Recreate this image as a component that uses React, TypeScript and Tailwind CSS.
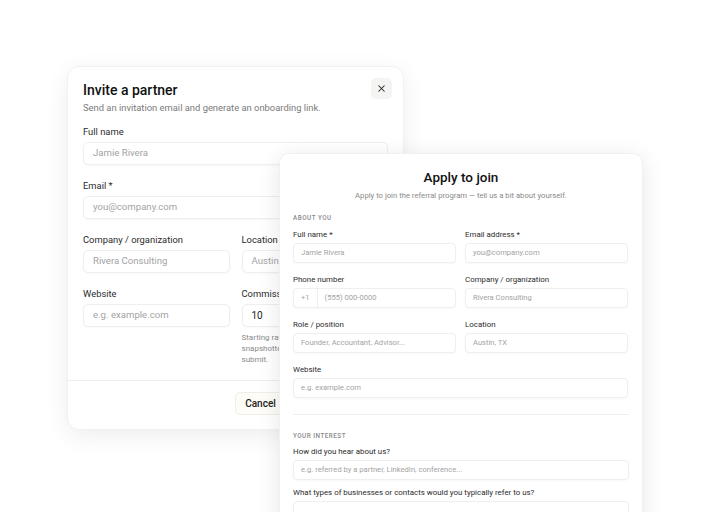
import React from "react";
import { X } from "lucide-react";

const font = { fontFamily: 'Roboto, "Noto Sans", sans-serif' };

function Field({
  label,
  placeholder,
  value,
  className = "",
}: {
  label: string;
  placeholder?: string;
  value?: string;
  className?: string;
}) {
  return (
    <div className={"flex flex-col gap-[3px] " + className}>
      <label className="text-[9.4px] leading-[14px] text-[#2b2b2b]">{label}</label>
      <div className="h-[23px] rounded-[5px] border border-[#efefef] bg-white px-[9px] flex items-center shadow-[0_1px_2px_rgba(0,0,0,0.03)]">
        {value ? (
          <span className="text-[10px] text-[#222]">{value}</span>
        ) : (
          <span className="text-[9.6px] text-[#a3a3a3] whitespace-nowrap">{placeholder}</span>
        )}
      </div>
    </div>
  );
}

function SmallField({
  label,
  placeholder,
  prefix,
  className = "",
}: {
  label: string;
  placeholder: string;
  prefix?: string;
  className?: string;
}) {
  return (
    <div className={"flex flex-col gap-[2px] " + className}>
      <label className="text-[7.9px] leading-[12px] text-[#2b2b2b]">{label}</label>
      <div className="h-[20px] rounded-[4px] border border-[#efefef] bg-white flex items-center shadow-[0_1px_2px_rgba(0,0,0,0.03)]">
        {prefix && (
          <span className="h-full flex items-center px-[7px] border-r border-[#efefef] text-[7.6px] text-[#a3a3a3]">
            {prefix}
          </span>
        )}
        <span className="px-[7px] text-[7.6px] text-[#a3a3a3] whitespace-nowrap">{placeholder}</span>
      </div>
    </div>
  );
}

function InviteCard() {
  return (
    <div className="absolute left-[67px] top-[66px] w-[337px] h-[364px] rounded-[12px] bg-white border border-[#f1f1f1] shadow-[0_6px_24px_rgba(0,0,0,0.07)] flex flex-col">
      <div className="px-[15px] pt-[11px] flex flex-col">
        <div className="flex items-start justify-between">
          <h2 className="mt-[2px] text-[14px] leading-[20px] font-medium text-[#111]">Invite a partner</h2>
          <button className="w-[21px] h-[21px] mr-[-4px] rounded-[5px] bg-[#f4f4f3] flex items-center justify-center text-[#222]">
            <X size={11} strokeWidth={2.2} />
          </button>
        </div>
        <p className="mt-[1px] text-[9.4px] leading-[14px] text-[#7a7a7a]">
          Send an invitation email and generate an onboarding link.
        </p>
        <div className="mt-[10px] flex flex-col gap-[14px]">
          <Field label="Full name" placeholder="Jamie Rivera" />
          <Field label="Email *" placeholder="you@company.com" />
          <div className="grid grid-cols-2 gap-[12px]">
            <Field label="Company / organization" placeholder="Rivera Consulting" />
            <Field label="Location" placeholder="Austin, TX" />
          </div>
          <div className="grid grid-cols-2 gap-[12px]">
            <Field label="Website" placeholder="e.g. example.com" />
            <div className="flex flex-col">
              <Field label="Commission rate (%)" value="10" />
              <p className="mt-[5px] text-[8px] leading-[11px] text-[#8a8a8a]">
                Starting rate for this partner. It is snapshotted onto the application on submit.
              </p>
            </div>
          </div>
        </div>
      </div>
      <div className="mt-[15px] border-t border-[#efefef]" />
      <div className="px-[16px] pt-[11px] flex justify-end gap-[8px]">
        <button className="h-[23px] w-[51px] rounded-[5px] border border-[#efefe9] bg-[#fdfcf6] text-[10px] font-medium text-[#222]">
          Cancel
        </button>
        <button className="h-[23px] w-[93px] rounded-[5px] bg-[#222] text-[10px] font-medium text-white">
          Send invitation
        </button>
      </div>
    </div>
  );
}

function ApplyCard() {
  return (
    <div className="absolute left-[279px] top-[153px] w-[364px] h-[420px] rounded-[10px] bg-white border border-[#f1f1f1] shadow-[0_4px_22px_rgba(0,0,0,0.10)] px-[13px] pt-[14px]">
      <div className="flex flex-col items-center">
        <h2 className="text-[13.5px] leading-[18px] font-medium text-[#111]">Apply to join</h2>
        <p className="mt-[4px] text-[7.7px] leading-[12px] text-[#8a8a8a]">
          Apply to join the referral program — tell us a bit about yourself.
        </p>
      </div>
      <div className="mt-[11px] text-[6.3px] leading-[10px] tracking-[0.08em] font-medium text-[#8a8a8a] uppercase">
        About you
      </div>
      <div className="mt-[6px] flex flex-col gap-[11px] pr-[1px]">
        <div className="grid grid-cols-2 gap-[9px]">
          <SmallField label="Full name *" placeholder="Jamie Rivera" />
          <SmallField label="Email address *" placeholder="you@company.com" />
        </div>
        <div className="grid grid-cols-2 gap-[9px]">
          <SmallField label="Phone number" prefix="+1" placeholder="(555) 000-0000" />
          <SmallField label="Company / organization" placeholder="Rivera Consulting" />
        </div>
        <div className="grid grid-cols-2 gap-[9px]">
          <SmallField label="Role / position" placeholder="Founder, Accountant, Advisor..." />
          <SmallField label="Location" placeholder="Austin, TX" />
        </div>
        <SmallField label="Website" placeholder="e.g. example.com" />
      </div>
      <div className="mt-[16px] border-t border-[#efefef]" />
      <div className="mt-[16px] text-[6.3px] leading-[10px] tracking-[0.08em] font-medium text-[#8a8a8a] uppercase">
        Your interest
      </div>
      <div className="mt-[5px] flex flex-col gap-[7px]">
        <SmallField label="How did you hear about us?" placeholder="e.g. referred by a partner, LinkedIn, conference..." />
        <div className="flex flex-col gap-[2px]">
          <label className="text-[7.9px] leading-[12px] text-[#2b2b2b]">
            What types of businesses or contacts would you typically refer to us?
          </label>
          <div className="h-[60px] rounded-[4px] border border-[#efefef] bg-white" />
        </div>
      </div>
    </div>
  );
}

export default function App() {
  return (
    <div className="relative w-[709px] h-[512px] overflow-hidden bg-white" style={font}>
      <InviteCard />
      <ApplyCard />
    </div>
  );
}
